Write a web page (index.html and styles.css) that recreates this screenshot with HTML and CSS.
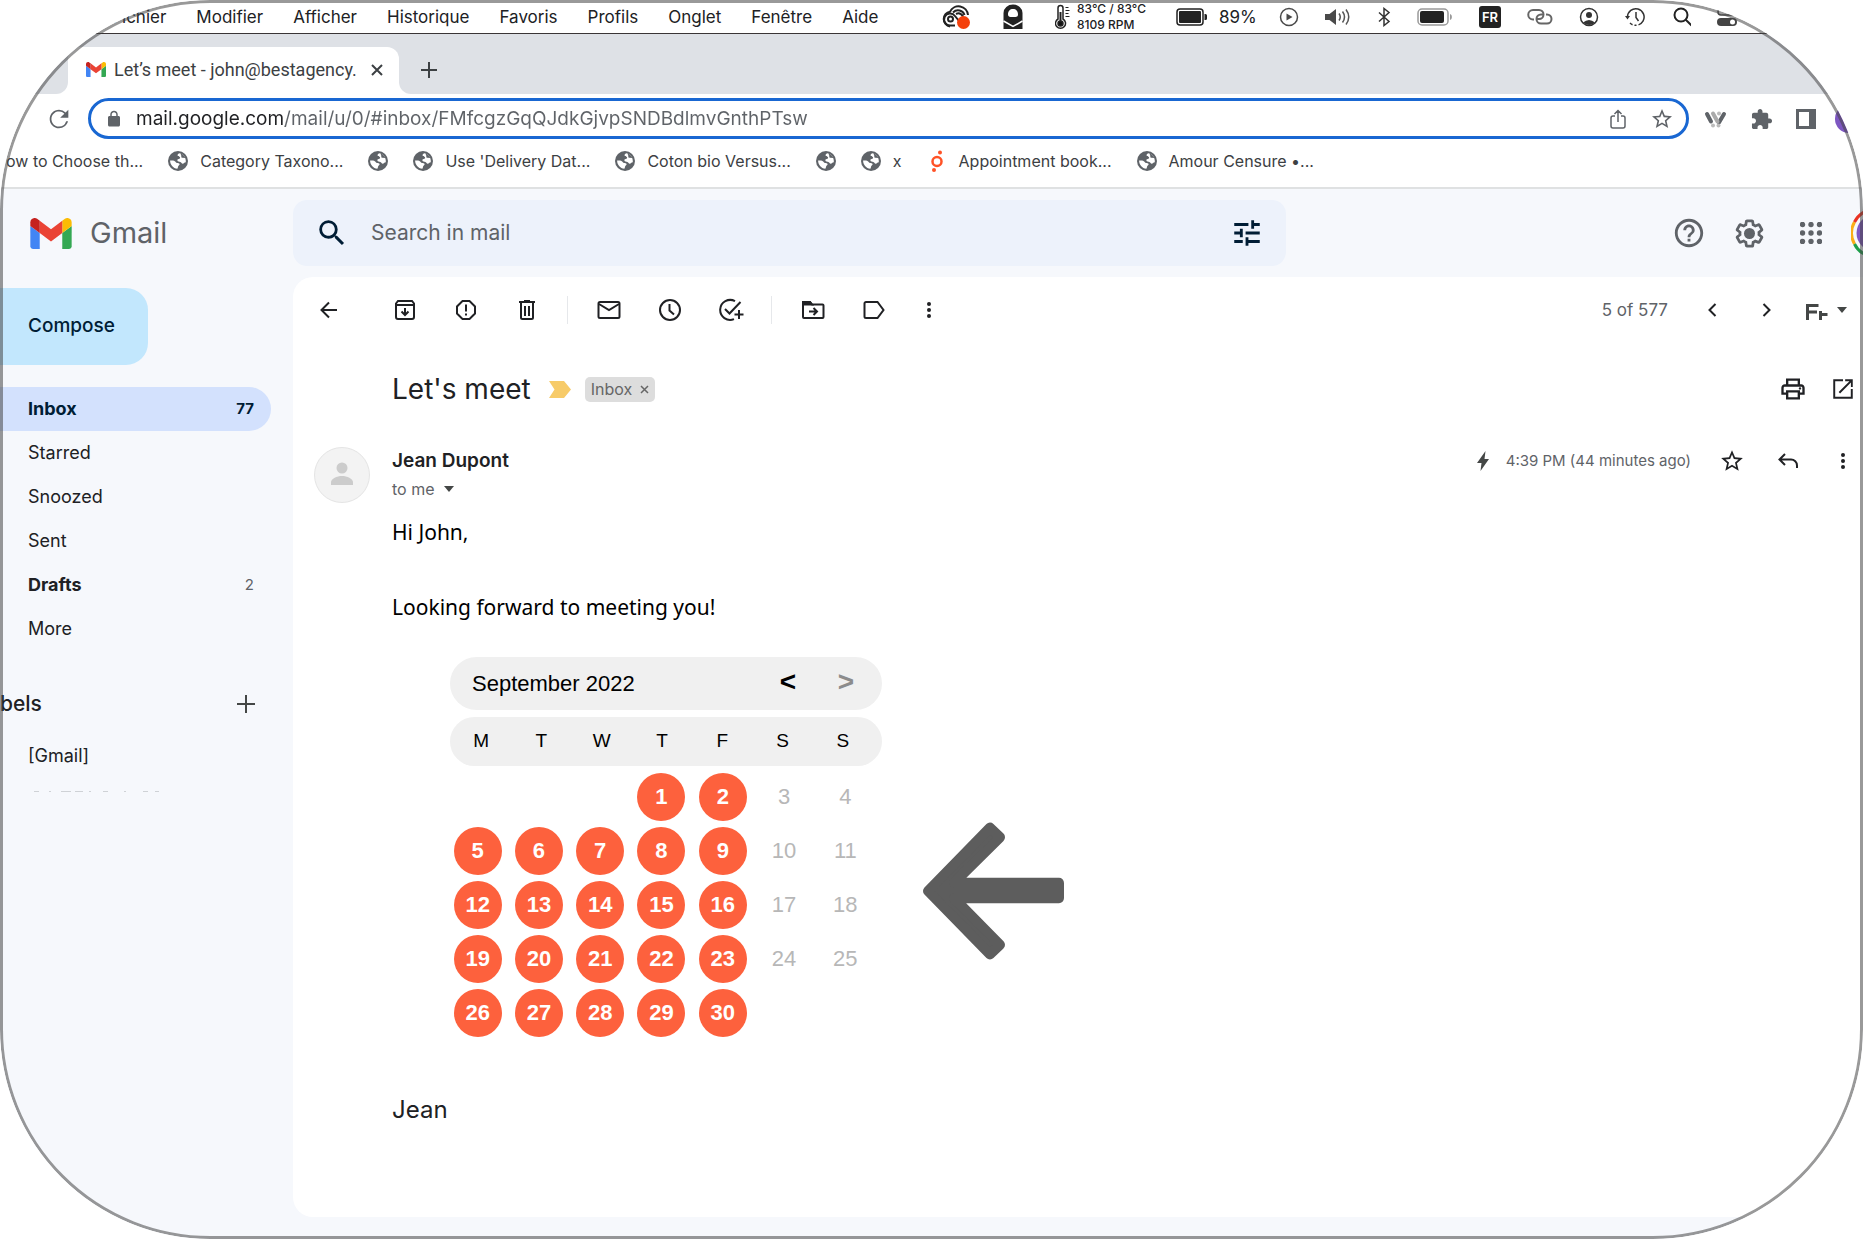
FILE: index.html
```html
<!DOCTYPE html>
<html lang="en">
<head>
<meta charset="utf-8">
<meta name="viewport" content="width=device-width, initial-scale=1">
<title>Let's meet - Gmail</title>
<link rel="stylesheet" href="styles.css">
</head>
<body>
<svg class="defs" aria-hidden="true">
  <symbol id="gmail" viewBox="52 42 88 66">
    <path fill="#4285f4" d="M58 108h14V74L52 59v43c0 3.32 2.69 6 6 6"/>
    <path fill="#34a853" d="M120 108h14c3.32 0 6-2.69 6-6V59l-20 15"/>
    <path fill="#fbbc04" d="M120 48v26l20-15v-8c0-7.42-8.47-11.65-14.4-7.2"/>
    <path fill="#ea4335" d="M72 74V48l24 18 24-18v26L96 92"/>
    <path fill="#c5221f" d="M52 51v8l20 15V48l-5.6-4.2c-5.94-4.45-14.4-.22-14.4 7.2"/>
  </symbol>
  <symbol id="globe" viewBox="0 0 20 20">
    <circle cx="10" cy="10" r="10" fill="#5f6368"/>
    <path fill="#fff" d="M11.5 2.2c-1.8.5-2.4 1.8-1.6 2.8.6.8 1.6.4 2.1 1.2.4.9-.4 1.6-1.3 1.7-1.2.1-1.4.8-1.3 1.6.3 1.2 1.9.9 3 1.4 1.2.6 1.2 1.9 2.4 1.8 1.1-.2 1.3-1.2 3-1.5.4-4.200-2-8.200-6.300-9zM2.100 9.500c-.1 4.200 3.100 7.900 7.200 8.300 1-.8.4-1.900 1-2.700.6-.9 1.500-1.100 1.300-2.100-.3-1-1.600-.9-2.700-1.100-1.300-.4-1.600-1.700-2.900-2.100-1.200-.4-2.400-.1-3.900-.3z"/>
    <path fill="#5f6368" d="M12.500 2.500c.2 1.200.9 1.500.8 2.700-.2 1.200.6 1.700 1.500 1.600l2.500.3c-.8-2.300-2.500-4-4.800-4.600z"/>
  </symbol>
  <symbol id="dots" viewBox="0 0 6 20">
    <circle cx="3" cy="4" r="2"/><circle cx="3" cy="10" r="2"/><circle cx="3" cy="16" r="2"/>
  </symbol>
  <symbol id="star" viewBox="0 0 24 24"><path d="M22 9.240l-7.190-.62L12 2 9.190 8.630 2 9.240l5.460 4.730L5.820 21 12 17.270 18.180 21l-1.630-7.030L22 9.240zM12 15.400l-3.760 2.270 1-4.280-3.320-2.880 4.380-.38L12 6.100l1.710 4.040 4.380.38-3.320 2.880 1 4.280L12 15.400z"/></symbol>
</svg>

<div class="frame">
  <nav class="menubar" aria-label="System menu">
    <ul class="menus">
      <li>Fichier</li><li>Modifier</li><li>Afficher</li><li>Historique</li><li>Favoris</li><li>Profils</li><li>Onglet</li><li>Fenêtre</li><li>Aide</li>
    </ul>
    <div class="status">
      <svg width="30" height="24" viewBox="0 0 30 24" fill="none"><path d="M9 21.500a7.500 7.500 0 0 1 0-14.800A9.500 9.500 0 0 1 27 10" stroke="#222" stroke-width="2"/><path d="M14 20.500H9.500a6 6 0 1 1 4.500-9.500l4 5M12 7.500c4-4 10-2 11.500 2.500M15 9c3-1.500 5.500 0 7 2.500" stroke="#222" stroke-width="2"/><circle cx="9.500" cy="14" r="2.500" stroke="#222" stroke-width="2"/><circle cx="22.500" cy="17.500" r="6.500" fill="#f4400b"/></svg>
      <svg width="32" height="26" viewBox="2 0 32 26"><path fill="#222" d="M8.500 25V9a9.500 8.500 0 0 1 19 0v16zM13 10.500c0 1.500 1 2.500 2.500 2.500h5c1.500 0 2.500-1 2.500-2.500C23 7 21 5 18 5s-5 2-5 5.500z" fill-rule="evenodd"/><path d="m8.500 17 9.500 5.500 9.500-5.500" fill="none" stroke="#fff" stroke-width="1.500"/></svg>
      <div class="temps">
        <svg width="16" height="26" viewBox="0 0 16 26" fill="none" stroke="#222" stroke-width="1.500"><path d="M3 15V4a2.500 2.500 0 0 1 5 0v11a5 5 0 1 1-5 0z"/><circle cx="5.500" cy="19.500" r="2.500" fill="#111"/><path d="M5.500 8v10" stroke-width="2"/><path d="M10.500 3.500h3M10.500 6.500h4M10.500 9.500h3M10.500 12.500h4" stroke-width="1"/></svg>
        <span>83°C / 83°C<br>8109 RPM</span>
      </div>
      <div class="power">
        <svg width="32" height="18" viewBox="0 0 32 18"><rect x="1" y="1" width="26" height="16" rx="3" fill="none" stroke="#222" stroke-width="1.500"/><rect x="3" y="3" width="22" height="12" rx="1" fill="#222"/><path d="M28.500 6h1a1.500 1.500 0 0 1 1.500 1.500v3a1.500 1.500 0 0 1-1.500 1.500h-1z" fill="#222"/></svg>
        <span>89%</span>
      </div>
      <svg width="20" height="20" viewBox="0 0 20 20"><circle cx="10" cy="10" r="8.500" fill="none" stroke="#4a4a4a" stroke-width="1.500"/><path d="M7.500 6.500v7l6-3.500z" fill="#4a4a4a"/></svg>
      <svg width="26" height="20" viewBox="0 0 26 20" fill="none" stroke="#555" stroke-width="1.500"><path fill="#4a4a4a" stroke="none" d="M0 7h4.500L11 2v16l-6.500-5H0z"/><path d="M14 6.500q2.500 3.500 0 7M17.500 4.500q4 5.500 0 11M21 2.500q5.500 7.500 0 15"/></svg>
      <svg width="14" height="20" viewBox="0 0 14 20" fill="none" stroke="#333" stroke-width="1.500"><path d="m2 5.500 10 9-5 4V1.500l5 4-10 9"/></svg>
      <svg width="36" height="18" viewBox="0 0 36 18"><rect x="1" y="1" width="30" height="16" rx="4" fill="none" stroke="#999" stroke-width="1.500"/><rect x="3" y="3" width="24" height="12" rx="2" fill="#222"/><path d="M33 6c2.500.5 2.500 5.500 0 6z" fill="#999"/></svg>
      <span class="locale">FR</span>
      <svg width="26" height="18" viewBox="0 0 26 18" fill="none" stroke="#666" stroke-width="2"><path d="M7 11.500H6A4.500 4.500 0 0 1 6 2h6a4.500 4.500 0 0 1 0 9h-2"/><path d="M19 6.500h1a4.500 4.500 0 0 1 0 9h-6a4.500 4.500 0 0 1 0-9h2"/></svg>
      <svg width="20" height="20" viewBox="0 0 20 20"><circle cx="10" cy="10" r="8.500" fill="none" stroke="#333" stroke-width="1.500"/><circle cx="10" cy="8" r="3" fill="#333"/><path d="M4 15.500q6-5 12 0-5.500 5-12 0z" fill="#333"/></svg>
      <svg width="20" height="20" viewBox="0 0 20 20" fill="none" stroke="#333" stroke-width="1.500"><path d="M2.500 10A8.300 8.300 0 1 1 5 16" stroke-dasharray="36 2 2 2"/><path d="M11 5v5.500l2.500 3.500"/><path d="m0 9 2.500 3.500L5 9z" fill="#333" stroke="none"/></svg>
      <svg width="20" height="20" viewBox="-2 0 20 20" fill="none" stroke="#222" stroke-width="2"><circle cx="8" cy="8" r="6.500"/><path d="m12.500 12.500 6 6"/></svg>
      <svg width="20" height="20" viewBox="0 0 20 20"><rect x="1" y="2" width="18" height="6" rx="3" fill="none" stroke="#444" stroke-width="1.500"/><rect y="11" width="20" height="8" rx="4" fill="#444"/><circle cx="15.500" cy="15" r="2.500" fill="#fff"/></svg>
    </div>
  </nav>

  <div class="tabstrip">
    <div class="strip-left"></div>
    <div class="tab-slot">
      <div class="tab">
        <svg width="20" height="15"><use href="#gmail"/></svg>
        <span>Let’s meet - john@bestagency.</span>
        <button class="plain" aria-label="Close tab"><svg width="12" height="12" viewBox="0 0 12 12" stroke="#3c4043" stroke-width="2"><path d="m1 1 10 10M11 1 1 11"/></svg></button>
      </div>
    </div>
    <div class="strip-right">
      <button class="plain" aria-label="New tab"><svg width="16" height="16" viewBox="0 0 16 16" stroke="#3c4043" stroke-width="2"><path d="M8 0v16M0 8h16"/></svg></button>
    </div>
  </div>

  <div class="toolbar">
    <button class="plain" aria-label="Reload"><svg width="28" height="28" viewBox="0 0 24 24" fill="#5f6368"><path d="M17.650 6.350A7.958 7.958 0 0 0 12 4c-4.420 0-7.990 3.580-7.990 8s3.570 8 7.990 8c3.730 0 6.840-2.550 7.730-6h-1.600A6.500 6.500 0 0 1 12 18.500 6.500 6.500 0 1 1 16.600 7.400L13 11h7V4l-2.350 2.350z"/></svg></button>
    <div class="omnibox">
      <svg width="18" height="18" viewBox="0 0 24 24" fill="#5f6368"><path d="M18 8h-1V6c0-2.760-2.240-5-5-5S7 3.240 7 6v2H6c-1.100 0-2 .9-2 2v10c0 1.100.9 2 2 2h12c1.100 0 2-.9 2-2V10c0-1.100-.9-2-2-2zM9 8V6c0-1.660 1.340-3 3-3s3 1.340 3 3v2H9z"/></svg>
      <input class="url" type="text" aria-label="Address" value="mail.google.com/mail/u/0/#inbox/FMfcgzGqQJdkGjvpSNDBdlmvGnthPTsw">
      <button class="plain" aria-label="Share"><svg width="16" height="20" viewBox="0 0 16 20" fill="none" stroke="#5f6368" stroke-width="1.500"><path d="M5 7H3a2 2 0 0 0-2 2v8a2 2 0 0 0 2 2h10a2 2 0 0 0 2-2V9a2 2 0 0 0-2-2h-2M8 13V1.500M4.500 5 8 1.500 11.500 5"/></svg></button>
      <button class="plain" aria-label="Bookmark"><svg width="24" height="24" fill="#5f6368"><use href="#star"/></svg></button>
    </div>
    <div class="extensions">
      <svg width="24" height="18" viewBox="0 0 24 18" stroke-width="4" stroke-linecap="round"><path d="m3 4 4 7.500M20 4l-5 8.500" stroke="#5f6368"/><path d="m9 3.500 4.500 8" stroke="#aaa"/><g fill="#bbb"><circle cx="15" cy="3.500" r="2"/><circle cx="9" cy="15.500" r="2"/><circle cx="14.500" cy="15.500" r="2"/></g></svg>
      <svg width="22" height="22" viewBox="1 0 23 23" fill="#5f6368"><path d="M20.500 11H19V7c0-1.100-.9-2-2-2h-4V3.500C13 2.120 11.880 1 10.500 1S8 2.120 8 3.500V5H4c-1.100 0-1.990.9-1.990 2v3.800H3.500c1.490 0 2.700 1.210 2.700 2.700s-1.210 2.700-2.700 2.700H2V20c0 1.100.9 2 2 2h3.800v-1.500c0-1.490 1.210-2.700 2.700-2.700 1.490 0 2.700 1.210 2.700 2.700V22H17c1.100 0 2-.9 2-2v-4h1.500c1.380 0 2.500-1.120 2.500-2.500S21.880 11 20.500 11z"/></svg>
      <svg width="20" height="20" viewBox="0 0 20 20"><path fill="#5f6368" fill-rule="evenodd" d="M0 0h20v20H0zM3 3v14h10V3z"/></svg>
      <span class="profile"></span>
    </div>
  </div>

  <nav class="bookmarks" aria-label="Bookmarks">
    <a href="#">ow to Choose th...</a>
    <a href="#"><svg width="20" height="20"><use href="#globe"/></svg>Category Taxono...</a>
    <a href="#" aria-label="Site"><svg width="20" height="20"><use href="#globe"/></svg></a>
    <a href="#"><svg width="20" height="20"><use href="#globe"/></svg>Use 'Delivery Dat...</a>
    <a href="#"><svg width="20" height="20"><use href="#globe"/></svg>Coton bio Versus...</a>
    <a href="#" aria-label="Site"><svg width="20" height="20"><use href="#globe"/></svg></a>
    <a href="#"><svg width="20" height="20"><use href="#globe"/></svg>x</a>
    <a href="#"><svg width="20" height="22" viewBox="0 0 20 22"><circle cx="10" cy="11.500" r="4.500" fill="none" stroke="#ff5226" stroke-width="2.500"/><circle cx="13" cy="2.500" r="2" fill="#ff5226"/><circle cx="7" cy="20" r="2" fill="#ff5226"/></svg>Appointment book...</a>
    <a href="#"><svg width="20" height="20"><use href="#globe"/></svg>Amour Censure •...</a>
  </nav>

  <div class="app">
    <header class="appbar">
      <div class="brand"><svg width="42" height="31"><use href="#gmail"/></svg><span>Gmail</span></div>
      <form class="search">
        <button class="plain" type="button" aria-label="Search"><svg width="34" height="34" viewBox="0 0 24 24" fill="#001d35"><path d="M15.500 14h-.79l-.28-.27A6.471 6.471 0 0 0 16 9.500 6.500 6.500 0 1 0 9.500 16c1.610 0 3.090-.59 4.230-1.570l.27.28v.79l5 4.990L20.490 19l-4.990-5zm-6 0C7.010 14 5 11.990 5 9.500S7.010 5 9.500 5 14 7.010 14 9.500 11.990 14 9.500 14z"/></svg></button>
        <input type="search" aria-label="Search in mail" placeholder="Search in mail">
        <button class="plain" type="button" aria-label="Search options"><svg width="34" height="34" viewBox="0 0 24 24" fill="#001d35"><path d="M3 17v2h6v-2H3zM3 5v2h10V5H3zm10 16v-2h8v-2h-8v-2h-2v6h2zM7 9v2H3v2h4v2h2V9H7zm14 4v-2H11v2h10zm-6-4h2V7h4V5h-4V3h-2v6z"/></svg></button>
      </form>
      <div class="account">
        <button class="icon" aria-label="Support"><svg width="34" height="34" viewBox="0 0 24 24" fill="#5f6368"><path d="M11 18h2v-2h-2v2zm1-16C6.480 2 2 6.480 2 12s4.480 10 10 10 10-4.480 10-10S17.520 2 12 2zm0 18c-4.410 0-8-3.590-8-8s3.590-8 8-8 8 3.590 8 8-3.590 8-8 8zm0-14c-2.210 0-4 1.790-4 4h2c0-1.100.9-2 2-2s2 .9 2 2c0 2-3 1.750-3 5h2c0-2.250 3-2.500 3-5 0-2.210-1.790-4-4-4z"/></svg></button>
        <button class="icon" aria-label="Settings"><svg width="33" height="33" viewBox="0 0 24 24" fill="#5f6368"><path d="M13.850 22.250h-3.700c-.74 0-1.360-.54-1.450-1.270l-.27-1.890c-.27-.14-.53-.29-.79-.46l-1.800.72c-.7.26-1.470-.03-1.810-.65L2.200 15.530c-.35-.66-.2-1.440.36-1.880l1.530-1.190c-.01-.15-.02-.3-.02-.46 0-.15.010-.31.020-.46l-1.520-1.190c-.59-.45-.74-1.260-.37-1.880l1.850-3.190c.34-.62 1.110-.9 1.790-.63l1.810.73c.26-.17.52-.32.78-.46l.27-1.910c.09-.7.71-1.250 1.440-1.250h3.700c.74 0 1.360.54 1.450 1.270l.27 1.890c.27.14.53.29.79.46l1.800-.72c.71-.26 1.480.030 1.820.65l1.840 3.180c.36.66.2 1.440-.36 1.880l-1.520 1.190c.010.15.020.3.020.46s-.010.31-.020.46l1.520 1.190c.56.45.72 1.230.37 1.860l-1.860 3.220c-.34.62-1.110.9-1.800.63l-1.800-.72c-.26.17-.52.32-.78.46l-.27 1.910c-.1.68-.72 1.220-1.460 1.220zm-3.230-2h2.760l.37-2.550.53-.22c.44-.18.88-.44 1.340-.78l.45-.34 2.380.96 1.380-2.400-2.030-1.580.070-.56c.030-.26.060-.51.060-.78s-.030-.53-.060-.78l-.070-.56 2.030-1.580-1.390-2.400-2.390.96-.45-.35c-.42-.32-.87-.58-1.330-.77l-.52-.22-.37-2.550h-2.760l-.37 2.550-.53.21c-.44.19-.88.44-1.340.79l-.45.33-2.380-.95-1.390 2.390 2.030 1.580-.070.56a7 7 0 0 0-.060.79c0 .26.020.53.060.78l.070.56-2.030 1.580 1.380 2.400 2.390-.96.45.35c.43.33.86.58 1.330.77l.53.22.38 2.550z"/><circle cx="12" cy="12" r="4"/></svg></button>
        <button class="icon" aria-label="Google apps"><svg width="22" height="22" viewBox="0 0 22 22" fill="#5f6368"><g id="dotrow"><circle cx="2.500" cy="2.500" r="2.700"/><circle cx="11" cy="2.500" r="2.700"/><circle cx="19.500" cy="2.500" r="2.700"/></g><use href="#dotrow" y="8.500"/><use href="#dotrow" y="17"/></svg></button>
        <button class="plain" aria-label="Account"><svg width="48" height="48" viewBox="0 0 48 48" fill="none" stroke-width="3"><circle cx="24" cy="24" r="18.500" fill="#7e57c2"/><path d="M3.500 35A22.500 22.500 0 0 1 3.500 13" stroke="#fbad17"/><path d="M3.500 13A22.500 22.500 0 0 1 44 13" stroke="#ea3323"/><path d="M3.500 35A22.500 22.500 0 0 0 44 35" stroke="#1e9e4a"/></svg></button>
      </div>
    </header>

    <div class="columns">
      <aside class="sidebar">
        <button class="compose">Compose</button>
        <nav aria-label="Folders">
          <a class="folder current" href="#">Inbox<span>77</span></a>
          <a class="folder" href="#">Starred</a>
          <a class="folder" href="#">Snoozed</a>
          <a class="folder" href="#">Sent</a>
          <a class="folder unread" href="#">Drafts<span>2</span></a>
          <a class="folder" href="#">More</a>
        </nav>
        <div class="labels"><h2>bels</h2><button class="plain" aria-label="Create label"><svg width="20" height="20" viewBox="0 0 20 20" stroke="#444746" stroke-width="2"><path d="M10 1v18M1 10h18"/></svg></button></div>
        <a class="folder" href="#">[Gmail]</a>
        <svg class="faded" width="130" height="1" viewBox="0 0 130 1" stroke="#cfd2d6"><path d="M5 .5h5M20 .5h2M32 .5h10M46 .5h8M60 .5h2M74 .5h5M95 .5h2M114 .5h5M126 .5h8"/></svg>
      </aside>

      <main class="panel">
        <div class="actions">
          <button class="icon back" aria-label="Back"><svg width="20" height="20" viewBox="0 0 20 20" class="line"><path d="M18 10H3M10 2.500 2.500 10l7.500 7.500"/></svg></button>
          <button class="icon" aria-label="Archive"><svg width="20" height="20" viewBox="0 0 20 20" class="line"><path d="M1 3.500 3 1h14l2 2.500V17a2 2 0 0 1-2 2H3a2 2 0 0 1-2-2zM1 5h18M10 8v7M6.500 11.500 10 15l3.500-3.500"/></svg></button>
          <button class="icon" aria-label="Report spam"><svg width="20" height="20" viewBox="0 0 20 20" class="line"><path d="M6.500 1h7L19 6.500v7L13.500 19h-7L1 13.500v-7zM10 4.500v7M10 13.500v2"/></svg></button>
          <button class="icon" aria-label="Delete"><svg width="18" height="20" viewBox="0 0 18 20" class="line"><path d="M1 2h16M6 1h6M3 3v14.500A1.500 1.500 0 0 0 4.500 19h9a1.500 1.500 0 0 0 1.500-1.500V3M7 6v10M11 6v10"/></svg></button>
          <span class="divider"></span>
          <button class="icon" aria-label="Mark as unread"><svg width="24" height="18" viewBox="0 0 24 18" class="line"><rect x="1.500" y="1" width="21" height="16" rx="1.500"/><path d="m2 3 10 6 10-6"/></svg></button>
          <button class="icon" aria-label="Snooze"><svg width="24" height="24" viewBox="0 0 24 24" class="line"><circle cx="12" cy="12" r="10"/><path d="M11.500 6v6.500l4.500 4"/></svg></button>
          <button class="icon" aria-label="Add to tasks"><svg width="26" height="24" viewBox="0 0 26 24" class="line"><path d="M17 3.200A10 10 0 1 0 16 21.200M7 11l4.500 4.500L22.500 4M21 12v9M16.500 16.500h9"/></svg></button>
          <span class="divider"></span>
          <button class="icon" aria-label="Move to"><svg width="24" height="20" viewBox="0 0 24 20" class="line"><path d="M2 2h7l2 2.500h10.500a1 1 0 0 1 1 1V17a1 1 0 0 1-1 1H3a1 1 0 0 1-1-1zM8 11.500h8M12.500 8l3.500 3.500-3.500 3.500"/><path d="M2 2h7l2 2.500H2z" fill="#202124"/></svg></button>
          <button class="icon" aria-label="Labels"><svg width="22" height="18" viewBox="0 0 22 18" class="line"><path d="M3 1h11.500L20.500 9l-6 8H3a1.500 1.500 0 0 1-1.500-1.500v-13A1.500 1.500 0 0 1 3 1z"/></svg></button>
          <button class="plain more" aria-label="More"><svg width="6" height="20" fill="#202124"><use href="#dots"/></svg></button>
          <span class="count">5 of 577</span>
          <button class="plain pager" aria-label="Newer"><svg width="10" height="14" viewBox="0 0 10 14" class="line"><path d="M8.500 1 2.500 7l6 6"/></svg></button>
          <button class="plain pager" aria-label="Older"><svg width="10" height="14" viewBox="0 0 10 14" class="line"><path d="m1.500 1 6 6-6 6"/></svg></button>
          <button class="plain lang" aria-label="Input language"><svg width="22" height="16" viewBox="0 0 22 16" fill="none" stroke="#444746" stroke-width="3"><path d="M1.500 16V1.500h11M1.500 8H11M14.500 16V7M14.500 10.500h7"/></svg><svg width="10" height="6" viewBox="0 0 10 6" fill="#444746"><path d="M0 0h10L5 6z"/></svg></button>
        </div>

        <div class="subject">
          <h1>Let's meet</h1>
          <svg width="22" height="17" viewBox="0 0 22 17" fill="#f7cb69"><path d="M0 0h15l7 8.500-7 8.500H0l5.500-8.500z"/></svg>
          <button class="chip">Inbox<svg width="9" height="9" viewBox="0 0 9 9" stroke="#666" stroke-width="1.500"><path d="m1 1 7 7M8 1 1 8"/></svg></button>
          <div class="subject-tools">
            <button class="plain" aria-label="Print"><svg width="28" height="28" viewBox="0 0 24 24" fill="#202124"><path d="M19 8h-1V3H6v5H5c-1.660 0-3 1.340-3 3v6h4v4h12v-4h4v-6c0-1.660-1.340-3-3-3zM8 5h8v3H8V5zm8 14H8v-4h8v4zm2-4v-2H6v2H4v-4c0-.55.45-1 1-1h14c.55 0 1 .45 1 1v4h-2z"/><circle cx="18" cy="11.500" r="1"/></svg></button>
            <button class="plain" aria-label="Open in new window"><svg width="26" height="26" viewBox="0 0 24 24" fill="#202124"><path d="M19.200 19.200H4.800V4.800H12V3H3v18h18v-9h-1.800v7.200zM14 3v1.800h4l-10 10 1.300 1.300 10-10v4H21V3h-7z"/></svg></button>
          </div>
        </div>

        <article class="message">
          <svg class="avatar" width="56" height="56" viewBox="0 0 56 56"><circle cx="28" cy="28" r="27.500" fill="#f3f3f3" stroke="#e4e4e4"/><circle cx="28" cy="21" r="5.500" fill="#ccc"/><path d="M17 38v-2.500c0-4 6-6.500 11-6.500s11 2.500 11 6.500V38z" fill="#ccc"/></svg>
          <div class="content">
            <div class="sender">
              <div>
                <strong>Jean Dupont</strong>
                <button class="plain recipient">to me<svg width="10" height="6" viewBox="0 0 10 6" fill="#444746"><path d="M0 0h10L5 6z"/></svg></button>
              </div>
              <div class="meta">
                <svg width="12" height="20" viewBox="0 0 12 20" fill="#444746"><path d="M8.500 0 0 12h4.500L3.500 20 12 8H7.500z"/></svg>
                <time>4:39 PM (44 minutes ago)</time>
                <button class="plain star" aria-label="Star"><svg width="26" height="26" fill="#202124"><use href="#star"/></svg></button>
                <button class="plain reply" aria-label="Reply"><svg width="20" height="16" viewBox="0 0 20 16" class="line"><path d="M7 1 1.500 6.500 7 12M2 6.500h11a6 6 0 0 1 6 6V15"/></svg></button>
                <button class="plain" aria-label="More"><svg width="6" height="20" fill="#202124"><use href="#dots"/></svg></button>
              </div>
            </div>
            <p class="body">Hi John,</p>
            <p class="body">Looking forward to meeting you!</p>
            <div class="booking">
              <section class="calendar" aria-label="Available dates">
                <div class="month"><span>September 2022</span><button aria-label="Previous month">&lt;</button><button aria-label="Next month" disabled>&gt;</button></div>
                <table>
                  <thead><tr><th>M</th><th>T</th><th>W</th><th>T</th><th>F</th><th>S</th><th>S</th></tr></thead>
                  <tbody>
                    <tr><td></td><td></td><td></td><td><button>1</button></td><td><button>2</button></td><td>3</td><td>4</td></tr>
                    <tr><td><button>5</button></td><td><button>6</button></td><td><button>7</button></td><td><button>8</button></td><td><button>9</button></td><td>10</td><td>11</td></tr>
                    <tr><td><button>12</button></td><td><button>13</button></td><td><button>14</button></td><td><button>15</button></td><td><button>16</button></td><td>17</td><td>18</td></tr>
                    <tr><td><button>19</button></td><td><button>20</button></td><td><button>21</button></td><td><button>22</button></td><td><button>23</button></td><td>24</td><td>25</td></tr>
                    <tr><td><button>26</button></td><td><button>27</button></td><td><button>28</button></td><td><button>29</button></td><td><button>30</button></td><td></td><td></td></tr>
                  </tbody>
                </table>
              </section>
              <svg class="pointer" width="146" height="144" viewBox="0 0 146 142" preserveAspectRatio="none" fill="#5d5d5d" stroke="#5d5d5d" stroke-width="10" stroke-linejoin="round"><path d="m8 71 62-62.500 10 9.500-46 45h105v15H34l46 46-10 9.500z"/></svg>
            </div>
            <p class="signature">Jean</p>
          </div>
        </article>
      </main>
    </div>
  </div>
</div>
</body>
</html>
```
FILE: styles.css
```css
* { box-sizing: border-box; }

body {
  margin: 0;
  background: #fff;
  color: #202124;
  font: 18px/24px Inter, "Liberation Sans", sans-serif;
}

h1, h2, p, ul { margin: 0; padding: 0; font-weight: 400; }
a { color: inherit; text-decoration: none; }
svg { flex: none; display: block; }
.defs { position: absolute; width: 0; height: 0; }

button, input { font: inherit; color: inherit; }
button { border: 0; padding: 0; cursor: pointer; }
.plain, .icon {
  display: flex;
  align-items: center;
  justify-content: center;
  flex: none;
  background: none;
}
.icon { width: 41px; height: 41px; }
.line { fill: none; stroke: #202124; stroke-width: 2; }

/* Rounded outline drawn over the whole window */
.frame {
  position: relative;
  display: flex;
  flex-direction: column;
  min-height: 100vh;
  overflow: hidden;
  border-radius: 210px;
}
.frame::after {
  content: "";
  position: absolute;
  inset: 0;
  border: 3px solid rgba(70, 70, 70, 0.55);
  border-radius: 210px;
  pointer-events: none;
}

/* System menu bar */
.menubar {
  display: flex;
  align-items: center;
  justify-content: space-between;
  height: 34px;
  padding: 0 126px 0 112px;
  border-bottom: 1px solid #3a3536;
  font-size: 17px;
  white-space: nowrap;
}
.menus { display: flex; gap: 30px; list-style: none; }
.status { display: flex; align-items: center; gap: 26px; }
.temps { display: flex; align-items: center; gap: 6px; width: 95px; font-size: 12px; line-height: 16px; font-weight: 500; padding-top: 1px; }
.power { display: flex; align-items: center; gap: 11px; width: 77px; font-size: 17px; }
.locale {
  width: 22px;
  border-radius: 3px;
  background: #222;
  color: #fff;
  font-size: 13px;
  line-height: 22px;
  font-weight: 600;
  text-align: center;
}

/* Browser tabs */
.tabstrip { display: flex; height: 60px; font: 18px/24px Roboto, sans-serif; color: #3c4043; }
.strip-left { width: 68px; background: #dee1e6; border-bottom-right-radius: 12px; }
.tab-slot { width: 331px; padding-top: 13px; background: linear-gradient(#dee1e6 30px, #fff 30px); }
.tab {
  display: flex;
  align-items: center;
  height: 47px;
  padding: 0 16px 2px 18px;
  gap: 8px;
  background: #fff;
  border-radius: 12px 12px 0 0;
  white-space: nowrap;
}
.tab span { flex: 1; }
.strip-right { flex: 1; display: flex; align-items: center; padding: 11px 0 0 22px; background: #dee1e6; border-bottom-left-radius: 12px; }

.toolbar { display: flex; align-items: center; gap: 15px; height: 49px; padding-left: 45px; }
.omnibox {
  flex: 1;
  display: flex;
  align-items: center;
  gap: 24px;
  height: 41px;
  padding: 0 12px 0 14px;
  border: 3px solid #1967d2;
  border-radius: 21px;
}
.omnibox input {
  flex: 1;
  min-width: 0;
  margin-left: -11px;
  padding: 0;
  border: 0;
  outline: 0;
  font-size: 19px;
  color: #5f6368;
  background: linear-gradient(to right, #202124 149px, #5f6368 149px);
  -webkit-background-clip: text;
  background-clip: text;
  -webkit-text-fill-color: transparent;
}
.extensions { display: flex; align-items: center; gap: 23px; }
.profile { width: 28px; height: 28px; margin-left: -4px; border-radius: 50%; background: #7e57c2; }

.bookmarks {
  display: flex;
  align-items: center;
  gap: 25px;
  height: 46px;
  padding: 0 0 8px 6px;
  border-bottom: 2px solid #dfe1e2;
  font-size: 16px;
  color: #3c4043;
  white-space: nowrap;
}
.bookmarks a { display: flex; align-items: center; gap: 12px; }

/* Mail application */
.app { flex: 1; display: flex; flex-direction: column; background: #f6f8fc; }
.appbar { display: flex; align-items: center; height: 88px; }
.brand { display: flex; align-items: center; gap: 18px; width: 293px; padding-left: 30px; color: #5f6368; font-size: 29px; }
.search {
  flex: 0 1 993px;
  display: flex;
  align-items: center;
  height: 66px;
  padding: 0 22px;
  border-radius: 14px;
  background: #edf2fb;
}
.search input {
  flex: 1;
  min-width: 0;
  margin-left: 22px;
  padding: 0;
  border: 0;
  outline: 0;
  background: none;
  color: #5f6368;
  font-size: 21px;
}
.search input::placeholder { color: #5f6368; opacity: 1; }
.account { display: flex; align-items: center; gap: 20px; margin: 0 -36px 0 auto; }

.columns { flex: 1; display: flex; }
.sidebar { flex: none; width: 293px; padding: 11px 22px 0 0; }
.compose {
  display: block;
  width: 148px;
  height: 77px;
  padding: 0 0 2px 28px;
  margin-bottom: 22px;
  border-radius: 0 22px 22px 0;
  background: #c2e7fd;
  color: #001d35;
  font-size: 19px;
  font-weight: 500;
  text-align: left;
}
.folder { display: flex; align-items: center; justify-content: space-between; height: 44px; padding: 0 17px 0 28px; }
.folder span { font-size: 15px; }
.current { border-radius: 0 22px 22px 0; background: #d3e1fd; color: #001d35; font-weight: 700; }
.unread { font-weight: 700; }
.unread span { color: #5f6368; font-weight: 400; }
.labels { display: flex; align-items: center; justify-content: space-between; height: 60px; margin-top: 23px; padding-right: 15px; }
.labels h2 { font-size: 21px; font-weight: 500; }
.faded { margin: 13px 0 0 29px; }

.panel { flex: 1; min-width: 0; margin-bottom: 22px; padding: 12px 0 0 15px; border-radius: 20px 0 0 20px; background: #fff; }
.actions { display: flex; align-items: center; gap: 20px; height: 42px; }
.back { margin-right: 15px; }
.divider { width: 1px; height: 28px; background: #e6e8eb; }
.more { width: 30px; height: 41px; }
.count { margin-left: auto; color: #5f6368; font-size: 17px; line-height: 26px; }
.pager { width: 35px; height: 41px; }
.count + .pager { margin-left: 6px; }
.lang { gap: 9px; margin: 0 16px 0 2px; }
.lang svg:first-child { margin-top: 4px; }

.subject { display: flex; align-items: center; height: 60px; margin: 28px 0 0 84px; }
.subject h1 { font-size: 28px; line-height: 36px; margin-right: 18px; }
.chip {
  display: flex;
  align-items: center;
  gap: 8px;
  height: 25px;
  margin-left: 14px;
  padding: 0 6px;
  border-radius: 5px;
  background: #ddd;
  color: #666;
  font-size: 16px;
}
.subject-tools { display: flex; align-items: center; gap: 23px; margin: 0 7px 0 auto; }

.message { display: flex; gap: 22px; margin-top: 28px; padding-left: 6px; }
.content { flex: 1; min-width: 0; padding-top: 2px; }
.sender { display: flex; justify-content: space-between; align-items: flex-start; height: 68px; }
.sender strong { display: block; font-size: 19px; font-weight: 600; }
.recipient { gap: 9px; margin-top: 4px; color: #5f6368; font-size: 16px; }
.meta { display: flex; align-items: center; height: 24px; padding-right: 17px; color: #5f6368; font-size: 15px; }
.meta time { margin: 0 28px 0 17px; }
.star { margin-right: 33px; }
.reply { margin-right: 42px; }
.body { color: #000; font: 21px/30px "Noto Sans", sans-serif; }
.body + .body { margin-top: 45px; }

.booking { display: flex; align-items: flex-start; gap: 38px; margin: 35px 0 0 58px; color: #000; font-family: "Liberation Sans", Arial, sans-serif; }
.pointer { margin-top: 162px; }
.calendar { width: 432px; }
.month { display: flex; align-items: center; height: 53px; padding: 2px 22px; border-radius: 27px; background: #f0f0f0; font-size: 22px; }
.month span { flex: 1; }
.month button { width: 28px; margin: 0 0 4px 30px; background: none; font-size: 28px; font-weight: 700; }
.month button:disabled { color: #8c8c8c; }
table, tbody { display: block; }
thead { display: block; margin-top: 7px; border-radius: 25px; background: #f0f0f0; }
thead tr { height: 49px; padding: 0 9px 2px 1px; }
tr { display: grid; grid-template-columns: repeat(7, minmax(0, 1fr)); align-items: center; }
th { padding: 0; font-size: 19px; font-weight: 400; }
tbody { margin: 7px 6px 0 -3px; }
tbody tr { height: 48px; margin-bottom: 6px; }
td { padding: 0; color: #b7b7b7; font-size: 22px; text-align: center; }
td button { width: 48px; height: 48px; border-radius: 50%; background: #fd613d; color: #fff; font-weight: 700; }
.signature { margin-top: 51px; font-size: 24px; line-height: 32px; }
```
